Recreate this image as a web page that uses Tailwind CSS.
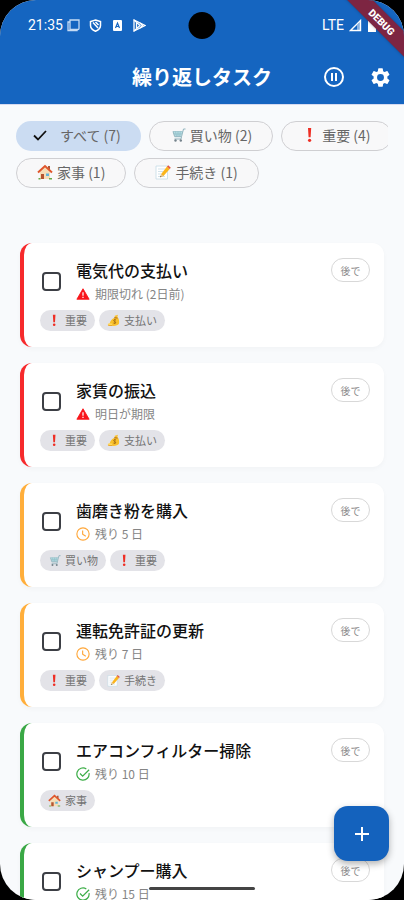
<!DOCTYPE html>
<html lang="ja">
<head>
<meta charset="utf-8">
<meta name="viewport" content="width=device-width, initial-scale=1">
<title>繰り返しタスク</title>
<script src="https://cdn.jsdelivr.net/npm/@tailwindcss/browser@4"></script>
</head>
<body class="bg-black font-['Noto_Sans_CJK_JP',sans-serif]">
<svg class="hidden" aria-hidden="true">
  <symbol id="cart" viewBox="0 0 16 16">
    <path d="M3 4.500h9.500l-1.500 5H5z" fill="#b4dce2"/>
    <path d="M3 4.500h9.500M4 7h8M5.500 4.500l1 5M8 4.500v5M10.300 4.500l-.6 5" stroke="#8fbcc5" stroke-width=".7" fill="none"/>
    <path d="M15.500 2h-2L11.500 9.700H4.700L3 4.500M11.500 9.700l-.5 2.300H4.500" fill="none" stroke="#8fb3bd" stroke-width="1"/>
    <circle cx="5.500" cy="13.500" r="1.200" fill="#75838c"/><circle cx="10.800" cy="13.500" r="1.200" fill="#75838c"/>
  </symbol>
  <symbol id="bang" viewBox="0 0 16 16">
    <path d="M6 1h3.200l-.6 9.200h-2z" fill="#ee2e24"/><circle cx="7.600" cy="13.300" r="1.600" fill="#ee2e24"/>
  </symbol>
  <symbol id="house" viewBox="0 0 16 16">
    <path d="M3 7.500 8 3l5 4.500V15H3z" fill="#f6ddb6"/>
    <path d="M11 2h2v4l-2-2z" fill="#a85b3c"/>
    <path d="M1 8.500 8 2l7 6.500" fill="none" stroke="#e0562c" stroke-width="2"/>
    <path d="M4 10h3v5H4z" fill="#b5542f"/><path d="M9 9.500h3V12H9z" fill="#5fb4d8"/>
    <path d="M1.500 14h2v1.500h-2zM12 14h3v1.500h-3z" fill="#67a844"/>
  </symbol>
  <symbol id="memo" viewBox="0 0 16 16">
    <path d="M1 2h11.500v13H1z" fill="#fff" stroke="#c4dbe6" stroke-width=".8"/>
    <path d="M3 5h7M3 7.500h5M3 10h3M3 12.500h7" stroke="#bfd5e0" stroke-width=".7"/>
    <path d="M12 2.500 14.700 5 8.500 12l-3.300 1.300L6.200 10z" fill="#fbb51c"/>
    <path d="m12 2.500 1.200-1.200 2.600 2.500L14.700 5z" fill="#e4553e"/>
    <path d="m6.200 10-1 3.300L8.500 12z" fill="#e8c79a"/><path d="m5.600 12-.4 1.300 1.300-.5z" fill="#333"/>
  </symbol>
  <symbol id="money" viewBox="0 0 16 16">
    <path d="M9.500 2.200 13.500 1l-.8 2.800c2 1.700 2.700 5.500 2 8.200-.6 2.400-8.500 3.700-10.700 1.500C2 11.400 5.500 5.500 9.500 4.500z" fill="#f9c02b"/>
    <path d="m9 4.500 4 .5" stroke="#ad6a1c" stroke-width="1.200"/>
    <path d="M10.800 7.200c-1.500-.7-3 .3-2.500 1.400.5 1 2.300.6 2.300 1.900 0 1.200-1.800 1.300-2.800.6M9.700 6v6.300" stroke="#8c5a12" stroke-width=".8" fill="none"/>
    <ellipse cx="4" cy="13.500" rx="3" ry="1.400" fill="#e79a16"/><ellipse cx="4" cy="12.600" rx="3" ry="1.200" fill="#ffd95a"/>
  </symbol>
  <symbol id="warn" viewBox="0 0 16 16">
    <path d="M8 2 15 14H1z" fill="#f8161b" stroke="#f8161b" stroke-linejoin="round"/>
    <path d="M7.300 6h1.400v4H7.300zM7.300 11.200h1.400v1.400H7.300z" fill="#fff"/>
  </symbol>
  <symbol id="clock" viewBox="0 0 16 16">
    <circle cx="8" cy="8" r="7" fill="none" stroke="#ffa73a" stroke-width="1.300"/>
    <path d="M7.600 4v4.300l3.600 2.200" fill="none" stroke="#ffa73a" stroke-width="1.300"/>
  </symbol>
  <symbol id="done" viewBox="0 0 16 16">
    <path d="M11.800 2.200A7 7 0 1 0 14.900 7" fill="none" stroke="#3eae49" stroke-width="1.400"/>
    <path d="m4.600 7.400 3 3L15 3.200" fill="none" stroke="#3eae49" stroke-width="1.400"/>
  </symbol>
</svg>

<div class="relative flex h-screen flex-col overflow-hidden rounded-[36px] bg-[#f8fafc]">
  <header class="shrink-0 border-b border-[#d5daf0] bg-[#1565c0] text-white">
    <div class="flex h-[50px] items-center pl-7 pr-7 font-[Roboto,sans-serif] text-sm">
      <span>21:35</span>
      <div class="ml-1 flex items-center gap-[9px]" aria-hidden="true">
        <svg class="size-[13px]" viewBox="0 0 13 13" fill="none" stroke="#c5dbf4" stroke-width="1.300"><path d="M3 1h9v8.500a1 1 0 0 1-1 1H3z"/><path d="M3 3H1v8.500h9v-1"/></svg>
        <svg class="size-[13px]" viewBox="0 0 13 13" fill="none" stroke="#fff" stroke-width="1.500"><path d="M6.500 1 11.500 2.500v4c0 2.500-2 4.500-5 5.700-3-1.200-5-3.200-5-5.700v-4z"/><path d="M4 3.500 9 9M6.500 3l3 3"/></svg>
        <svg class="size-[13px]" viewBox="0 0 13 13"><rect x="2" y="1" width="9" height="11" rx="1" fill="#fff"/><path d="m4.500 9 2-5 2 5M5.200 7.500h2.600" stroke="#1565c0" stroke-width="1.200" fill="none"/></svg>
        <svg class="size-[13px]" viewBox="0 0 13 13" fill="none" stroke="#fff" stroke-width="1.300"><path d="M1 1v11l11-5.500z"/><path d="m1 1 6 5.500L1 12M7 4l2.500 2.500L7 9M3.500 4v5"/></svg>
      </div>
      <span class="ml-auto mr-[5px]">LTE</span>
      <svg class="mr-[6px] size-[13px]" viewBox="0 0 13 13" aria-hidden="true"><path d="M1.500 11.500h10v-10z" fill="none" stroke="#fff" stroke-width="1.400"/><path d="M8 6v6h4V2z" fill="#fff" opacity=".5"/></svg>
      <svg class="h-[13px] w-[8px]" viewBox="0 0 8 13" aria-hidden="true"><path d="M2.500 0h3v1.500H8V13H0V1.500h2.500z" fill="#fff"/></svg>
    </div>
    <div class="grid h-[54px] grid-cols-[1fr_auto_1fr] items-center">
      <h1 class="col-start-2 text-xl font-bold">繰り返しタスク</h1>
      <div class="flex justify-end gap-6 pr-3">
        <button type="button" aria-label="一時停止"><svg class="size-[22px]" viewBox="0 0 22 22" fill="none" stroke="#fff" stroke-width="2"><circle cx="11" cy="11" r="9"/><path d="M9 7v8M13 7v8"/></svg></button>
        <button type="button" aria-label="設定"><svg class="size-[23px]" viewBox="0 0 24 24" fill="#fff"><path d="M19.140 12.940c.04-.3.06-.61.06-.94s-.02-.64-.07-.94l2.030-1.580a.49.49 0 0 0 .12-.61l-1.920-3.320a.49.49 0 0 0-.59-.22l-2.390.96a7 7 0 0 0-1.620-.94l-.36-2.540a.48.48 0 0 0-.48-.41h-3.840a.48.48 0 0 0-.47.41l-.36 2.540a7.300 7.300 0 0 0-1.620.94l-2.390-.96a.48.48 0 0 0-.59.22L2.740 8.870a.48.48 0 0 0 .12.61l2.030 1.580a6 6 0 0 0 0 1.880l-2.030 1.580a.49.49 0 0 0-.12.61l1.920 3.320c.12.22.37.29.59.22l2.390-.96c.5.38 1.030.7 1.620.94l.36 2.540c.05.24.24.41.48.41h3.840c.24 0 .44-.17.47-.41l.36-2.540a7.300 7.300 0 0 0 1.620-.94l2.390.96c.22.080.47 0 .59-.22l1.920-3.320a.48.48 0 0 0-.12-.61zM12 15.600a3.600 3.600 0 1 1 0-7.200 3.600 3.600 0 0 1 0 7.200z"/></svg></button>
      </div>
    </div>
  </header>

  <nav class="mx-4 mt-4 flex shrink-0 flex-col gap-[7px] overflow-hidden text-sm text-[#666] [&_button]:flex [&_button]:h-[30px] [&_button]:shrink-0 [&_button]:items-center [&_button]:gap-1 [&_button]:rounded-full [&_button]:px-5 [&_button]:pb-[2px]" aria-label="カテゴリ">
    <div class="flex gap-2">
      <button type="button" aria-pressed="true" class="bg-[#cbdcf2]"><svg class="-ml-1 mr-2 size-[16px]" viewBox="0 0 16 16" aria-hidden="true"><path d="m2 8.500 4 4 8-8.500" fill="none" stroke="#111" stroke-width="1.800"/></svg>すべて (7)</button>
      <button type="button" class="border border-[#cfcfd2] bg-[#f8f8f9]"><svg class="size-[16px]" aria-hidden="true"><use href="#cart"/></svg>買い物 (2)</button>
      <button type="button" class="border border-[#cfcfd2] bg-[#f8f8f9]"><svg class="size-[16px]" aria-hidden="true"><use href="#bang"/></svg>重要 (4)</button>
    </div>
    <div class="flex gap-2">
      <button type="button" class="border border-[#cfcfd2] bg-[#f8f8f9]"><svg class="size-[16px]" aria-hidden="true"><use href="#house"/></svg>家事 (1)</button>
      <button type="button" class="border border-[#cfcfd2] bg-[#f8f8f9]"><svg class="size-[16px]" aria-hidden="true"><use href="#memo"/></svg>手続き (1)</button>
    </div>
  </nav>

  <main class="min-h-0 flex-1 overflow-hidden px-5 pt-[55px]">
    <ul id="tasks" class="flex flex-col gap-4"></ul>
  </main>

  <button type="button" aria-label="タスクを追加" class="absolute bottom-[39px] right-[15px] flex size-[55px] items-center justify-center rounded-[14px] bg-[#1462bd] shadow-[0_3px_7px_rgba(0,0,0,0.3)]"><svg class="size-[16px]" viewBox="0 0 16 16"><path d="M8 1v14M1 8h14" stroke="#fff" stroke-width="2"/></svg></button>
  <div class="absolute bottom-[10px] left-1/2 h-[3px] w-[106px] -translate-x-1/2 rounded-full bg-[#444]"></div>
  <div class="absolute left-1/2 top-[12px] size-[27px] -translate-x-1/2 rounded-full bg-black"></div>
  <div class="absolute right-[-38px] top-[13px] flex h-[18px] w-[120px] rotate-45 items-center justify-center bg-[#7d2542] font-[Roboto,sans-serif] text-[10px] font-black text-white shadow-[0_0_3px_rgba(0,0,0,0.3)]">DEBUG</div>
</div>

<script>
const tagIcons = { '重要': 'bang', '支払い': 'money', '買い物': 'cart', '手続き': 'memo', '家事': 'house' };
const levels = {
  warn: 'border-[#f62a2c]',
  clock: 'border-[#ffae3b]',
  done: 'border-[#3aa845]'
};
const tasks = [
  ['電気代の支払い', '期限切れ (2日前)', 'warn', ['重要', '支払い']],
  ['家賃の振込', '明日が期限', 'warn', ['重要', '支払い']],
  ['歯磨き粉を購入', '残り 5 日', 'clock', ['買い物', '重要']],
  ['運転免許証の更新', '残り 7 日', 'clock', ['重要', '手続き']],
  ['エアコンフィルター掃除', '残り 10 日', 'done', ['家事']],
  ['シャンプー購入', '残り 15 日', 'done', []]
];
document.getElementById('tasks').innerHTML = tasks.map(([title, due, level, tags], i) => `
  <li class="rounded-xl border-l-4 ${levels[level]} bg-white pb-4 pl-4 pr-[14px] pt-[15px] shadow-[0_2px_5px_rgba(0,0,0,0.03)]">
    <div class="flex items-center">
      <input id="task${i}" type="checkbox" class="ml-[2px] mr-[15px] size-[19px] shrink-0 appearance-none rounded-[4px] border-2 border-[#3c3f45]">
      <div class="min-w-0 flex-1">
        <label for="task${i}" class="block text-base leading-6 font-medium text-[#111]">${title}</label>
        <p class="mt-[2px] flex items-center gap-[5px] text-xs leading-5 text-[#858585]"><svg class="size-[14px]" aria-hidden="true"><use href="#${level}"/></svg>${due}</p>
      </div>
      <button type="button" class="h-6 w-[39px] self-start rounded-full border border-[#d8d8d8] text-[10px] text-[#8a8a8a]">後で</button>
    </div>
    <div class="mt-[6px] flex h-[21px] gap-1">${tags.map(t => `<span class="flex items-center gap-1 rounded-full bg-[#e3e3e8] px-2 text-[11px] text-[#737373]"><svg class="size-[13px]" aria-hidden="true"><use href="#${tagIcons[t]}"/></svg>${t}</span>`).join('')}</div>
  </li>`).join('');
</script>
</body>
</html>
